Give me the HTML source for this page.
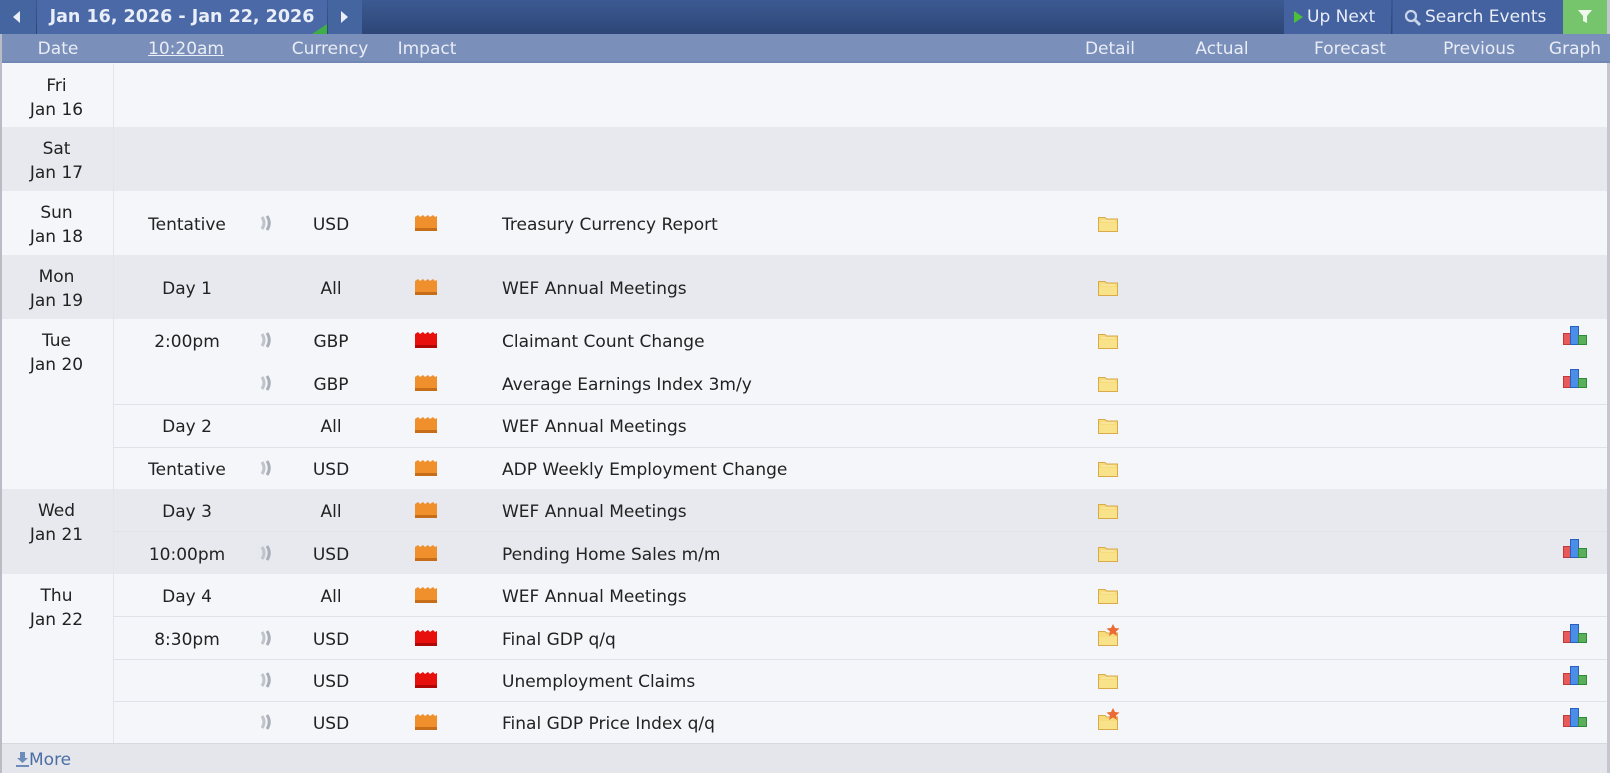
<!DOCTYPE html>
<html><head><meta charset="utf-8"><style>
*{margin:0;padding:0;box-sizing:border-box}
body{width:1610px;height:773px;overflow:hidden;background:#f4f6fa;font-family:"DejaVu Sans","Liberation Sans",sans-serif;font-size:17px;color:#222;position:relative}
.a{position:absolute}
.top{left:0;top:0;width:1610px;height:34px;background:linear-gradient(#3c5a92,#2d4677)}
.btn{top:0;height:34px;background:#4462a0;color:#e9eef8;font-weight:bold;font-size:17.5px;line-height:34px}
.hdr{left:0;top:34px;width:1610px;height:29px;background:#7a8fba;border-bottom:2px solid #7086b3;color:#e9edf6;font-size:17px;line-height:31px}
.hdr span{position:absolute;transform:translateX(-50%)}
.row{position:absolute;left:2px;width:1605px}
.g{background:#e7e9ee}
.w{background:#f4f6fa}
.c{position:absolute;transform:translate(-50%,-50%);white-space:nowrap;margin-top:2px}
.l{position:absolute;transform:translateY(-50%);white-space:nowrap;margin-top:2px}
.day{position:absolute;width:113px;left:0;text-align:center;line-height:23.5px;margin-top:2px}
.sep{position:absolute;left:113px;width:1494px;height:1px;background:#dfe2e8}
</style></head><body>
<div class="a top"></div>
<div class="a btn" style="left:0;width:36px;background:#4565a0"><svg class="a" style="left:13px;top:11px" width="8" height="12"><path d="M7 0V12L0 6Z" fill="#e9eef8"/></svg></div>
<div class="a btn" style="left:37px;width:290px;background:#4a69a6;text-align:center">Jan 16, 2026 - Jan 22, 2026<svg class="a" style="right:0;bottom:0" width="15" height="10"><path d="M15 0V10H0Z" fill="#3fae49"/></svg></div>
<div class="a btn" style="left:328px;width:34px;background:#4565a0"><svg class="a" style="left:13px;top:11px" width="8" height="12"><path d="M0 0V12L7 6Z" fill="#e9eef8"/></svg></div>
<div class="a btn" style="left:1284px;width:107px;font-weight:normal;font-size:17px;padding-left:23px"><svg class="a" style="left:10px;top:11px" width="9" height="12"><path d="M0 0V12L9 6Z" fill="#4cc03a"/></svg>Up Next</div>
<div class="a btn" style="left:1392px;width:171px;font-weight:normal;font-size:17px;padding-left:32px;border-left:1px solid #3a5690"><svg class="a" style="left:11px;top:9px" width="18" height="18"><circle cx="7" cy="7" r="5" fill="none" stroke="#c9d4ea" stroke-width="2.2"/><path d="M10.5 10.5L16 16" stroke="#c9d4ea" stroke-width="3"/></svg>Search Events</div>
<div class="a btn" style="left:1563px;width:44px;background:#76c56c"><svg class="a" style="left:15px;top:10px" width="14" height="14"><path d="M0 0H14L9 6V13L5 11V6Z" fill="#eef8ec"/></svg></div>
<div class="a" style="left:1607px;top:0;width:3px;height:773px;background:#c4c7cd"></div>
<div class="a hdr">
<span style="left:58px">Date</span><span style="left:186px;text-decoration:underline">10:20am</span><span style="left:330px">Currency</span><span style="left:427px">Impact</span><span style="left:1110px">Detail</span><span style="left:1222px">Actual</span><span style="left:1350px">Forecast</span><span style="left:1479px">Previous</span><span style="left:1575px">Graph</span>
</div>
<div class="a" style="left:0;top:34px;width:2px;height:739px;background:#b8bcc4"></div>

<div class="row w" style="top:64px;height:63px"></div>
<div class="row g" style="top:127px;height:64px"></div>
<div class="row w" style="top:191px;height:64px"></div>
<div class="row g" style="top:255px;height:64px"></div>
<div class="row w" style="top:319px;height:170px"></div>
<div class="row g" style="top:489px;height:85px"></div>
<div class="row w" style="top:574px;height:169px"></div>
<div class="a" style="left:113px;top:64px;width:1px;height:679px;background:#e2e5ea"></div>
<div class="a" style="left:2px;top:743px;width:1605px;height:30px;background:#e4e6eb;border-top:1px solid #d6d9df"></div>
<div class="a" style="left:16px;top:750px;color:#4b6ea5;font-size:17px"><svg style="vertical-align:-2px" width="13" height="15"><path d="M4 0H9V6H12L6.5 11L1 6H4Z M0 13H13V15H0Z" fill="#6d8cbc"/></svg>More</div>

<div class="day" style="top:73px">Fri<br>Jan 16</div>
<div class="day" style="top:136px">Sat<br>Jan 17</div>
<div class="day" style="top:200px">Sun<br>Jan 18</div>
<div class="day" style="top:264px">Mon<br>Jan 19</div>
<div class="day" style="top:328px">Tue<br>Jan 20</div>
<div class="day" style="top:498px">Wed<br>Jan 21</div>
<div class="day" style="top:583px">Thu<br>Jan 22</div>

<div class="sep" style="top:404px"></div><div class="sep" style="top:447px"></div><div class="sep" style="top:531px"></div><div class="sep" style="top:616px"></div><div class="sep" style="top:659px"></div><div class="sep" style="top:701px"></div>

<svg width="0" height="0" style="position:absolute"><defs>
<symbol id="snd" viewBox="0 0 14 18"><path d="M3 3Q7 9 3 15" fill="none" stroke="#c0c4cb" stroke-width="3"/><path d="M8 2Q12.5 9 8 16" fill="none" stroke="#a9aeb8" stroke-width="3"/></symbol>
<symbol id="imo" viewBox="0 0 22 17"><path d="M0 17V3L3 1L5 3L8 1L10 3L13 1L15 3L18 1L20 3L22 2V17Z" fill="#f0902c"/><rect y="14" width="22" height="3" fill="#c56d18"/></symbol>
<symbol id="imr" viewBox="0 0 22 17"><path d="M0 17V3L3 1L5 3L8 1L10 3L13 1L15 3L18 1L20 3L22 2V17Z" fill="#e8100c"/><rect y="14" width="22" height="3" fill="#b00806"/></symbol>
<symbol id="fld" viewBox="0 0 20 17"><path d="M0.5 2.5H7L8.5 4H19.5V16.5H0.5Z" fill="#f6dc7a" stroke="#d9a94a"/><path d="M1 8H19V16H1Z" fill="#f8e38a"/><path d="M3 6H17" stroke="#fbeeb8"/></symbol>
<symbol id="fls" viewBox="0 0 22 22"><path d="M0.5 7.5H7L8.5 9H19.5V21.5H0.5Z" fill="#f6dc7a" stroke="#d9a94a"/><path d="M1 13H19V21H1Z" fill="#f8e38a"/><path d="M15 0L17 4L21.5 4.5L18 7.5L19 12L15 9.5L11 12L12 7.5L8.5 4.5L13 4Z" fill="#ec6b34"/></symbol>
<symbol id="grp" viewBox="0 0 24 19"><rect x="0.5" y="7.5" width="7" height="11" fill="#e85a5a" stroke="#c03a3a"/><rect x="7.5" y="0.5" width="8" height="18" fill="#4a8ee8" stroke="#2a5fbf"/><rect x="15.5" y="9.5" width="8" height="9" fill="#5ab05a" stroke="#2f8a3a"/></symbol>
</defs></svg>

<div class="c" style="left:187px;top:223px">Tentative</div><svg class="a" style="left:259px;top:214px" width="14" height="18"><use href="#snd"/></svg><div class="c" style="left:331px;top:223px">USD</div><svg class="a" style="left:415px;top:214px" width="22" height="17"><use href="#imo"/></svg><div class="l" style="left:502px;top:223px">Treasury Currency Report</div><svg class="a" style="left:1098px;top:215px" width="20" height="17"><use href="#fld"/></svg>

<div class="c" style="left:187px;top:287px">Day 1</div><div class="c" style="left:331px;top:287px">All</div><svg class="a" style="left:415px;top:278px" width="22" height="17"><use href="#imo"/></svg><div class="l" style="left:502px;top:287px">WEF Annual Meetings</div><svg class="a" style="left:1098px;top:279px" width="20" height="17"><use href="#fld"/></svg>

<div class="c" style="left:187px;top:340px">2:00pm</div><svg class="a" style="left:259px;top:331px" width="14" height="18"><use href="#snd"/></svg><div class="c" style="left:331px;top:340px">GBP</div><svg class="a" style="left:415px;top:331px" width="22" height="17"><use href="#imr"/></svg><div class="l" style="left:502px;top:340px">Claimant Count Change</div><svg class="a" style="left:1098px;top:332px" width="20" height="17"><use href="#fld"/></svg><svg class="a" style="left:1563px;top:326px" width="24" height="19"><use href="#grp"/></svg>

<svg class="a" style="left:259px;top:374px" width="14" height="18"><use href="#snd"/></svg><div class="c" style="left:331px;top:383px">GBP</div><svg class="a" style="left:415px;top:374px" width="22" height="17"><use href="#imo"/></svg><div class="l" style="left:502px;top:383px">Average Earnings Index 3m/y</div><svg class="a" style="left:1098px;top:375px" width="20" height="17"><use href="#fld"/></svg><svg class="a" style="left:1563px;top:369px" width="24" height="19"><use href="#grp"/></svg>

<div class="c" style="left:187px;top:425px">Day 2</div><div class="c" style="left:331px;top:425px">All</div><svg class="a" style="left:415px;top:416px" width="22" height="17"><use href="#imo"/></svg><div class="l" style="left:502px;top:425px">WEF Annual Meetings</div><svg class="a" style="left:1098px;top:417px" width="20" height="17"><use href="#fld"/></svg>

<div class="c" style="left:187px;top:468px">Tentative</div><svg class="a" style="left:259px;top:459px" width="14" height="18"><use href="#snd"/></svg><div class="c" style="left:331px;top:468px">USD</div><svg class="a" style="left:415px;top:459px" width="22" height="17"><use href="#imo"/></svg><div class="l" style="left:502px;top:468px">ADP Weekly Employment Change</div><svg class="a" style="left:1098px;top:460px" width="20" height="17"><use href="#fld"/></svg>

<div class="c" style="left:187px;top:510px">Day 3</div><div class="c" style="left:331px;top:510px">All</div><svg class="a" style="left:415px;top:501px" width="22" height="17"><use href="#imo"/></svg><div class="l" style="left:502px;top:510px">WEF Annual Meetings</div><svg class="a" style="left:1098px;top:502px" width="20" height="17"><use href="#fld"/></svg>

<div class="c" style="left:187px;top:553px">10:00pm</div><svg class="a" style="left:259px;top:544px" width="14" height="18"><use href="#snd"/></svg><div class="c" style="left:331px;top:553px">USD</div><svg class="a" style="left:415px;top:544px" width="22" height="17"><use href="#imo"/></svg><div class="l" style="left:502px;top:553px">Pending Home Sales m/m</div><svg class="a" style="left:1098px;top:545px" width="20" height="17"><use href="#fld"/></svg><svg class="a" style="left:1563px;top:539px" width="24" height="19"><use href="#grp"/></svg>

<div class="c" style="left:187px;top:595px">Day 4</div><div class="c" style="left:331px;top:595px">All</div><svg class="a" style="left:415px;top:586px" width="22" height="17"><use href="#imo"/></svg><div class="l" style="left:502px;top:595px">WEF Annual Meetings</div><svg class="a" style="left:1098px;top:587px" width="20" height="17"><use href="#fld"/></svg>

<div class="c" style="left:187px;top:638px">8:30pm</div><svg class="a" style="left:259px;top:629px" width="14" height="18"><use href="#snd"/></svg><div class="c" style="left:331px;top:638px">USD</div><svg class="a" style="left:415px;top:629px" width="22" height="17"><use href="#imr"/></svg><div class="l" style="left:502px;top:638px">Final GDP q/q</div><svg class="a" style="left:1098px;top:624px" width="22" height="22"><use href="#fls"/></svg><svg class="a" style="left:1563px;top:624px" width="24" height="19"><use href="#grp"/></svg>

<svg class="a" style="left:259px;top:671px" width="14" height="18"><use href="#snd"/></svg><div class="c" style="left:331px;top:680px">USD</div><svg class="a" style="left:415px;top:671px" width="22" height="17"><use href="#imr"/></svg><div class="l" style="left:502px;top:680px">Unemployment Claims</div><svg class="a" style="left:1098px;top:672px" width="20" height="17"><use href="#fld"/></svg><svg class="a" style="left:1563px;top:666px" width="24" height="19"><use href="#grp"/></svg>

<svg class="a" style="left:259px;top:713px" width="14" height="18"><use href="#snd"/></svg><div class="c" style="left:331px;top:722px">USD</div><svg class="a" style="left:415px;top:713px" width="22" height="17"><use href="#imo"/></svg><div class="l" style="left:502px;top:722px">Final GDP Price Index q/q</div><svg class="a" style="left:1098px;top:708px" width="22" height="22"><use href="#fls"/></svg><svg class="a" style="left:1563px;top:708px" width="24" height="19"><use href="#grp"/></svg>
</body></html>
